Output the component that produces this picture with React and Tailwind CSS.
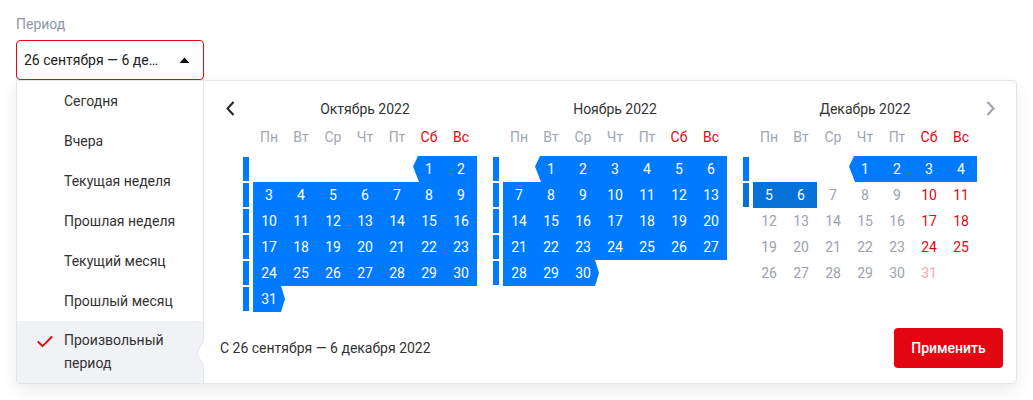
import { Check } from 'lucide-react'

const s = (d, o = {}) => ({ d, t: 's', ...o })
const ds = (d) => ({ d, t: 'ds' })
const g = (d) => ({ d, t: 'g' })
const r = (d) => ({ d, t: 'r' })
const p = (d) => ({ d, t: 'p' })
const _ = null

const range = (a, b, fn) => Array.from({ length: b - a + 1 }, (x, i) => fn(a + i))

const months = [
  {
    title: 'Октябрь 2022',
    rows: [
      { strip: 's', days: [_, _, _, _, _, s(1, { start: true }), s(2)] },
      { strip: 's', days: range(3, 9, s) },
      { strip: 's', days: range(10, 16, s) },
      { strip: 's', days: range(17, 23, s) },
      { strip: 's', days: range(24, 30, s) },
      { strip: 's', days: [s(31, { end: true }), _, _, _, _, _, _] },
    ],
  },
  {
    title: 'Ноябрь 2022',
    rows: [
      { strip: 's', days: [_, s(1, { start: true }), s(2), s(3), s(4), s(5), s(6)] },
      { strip: 's', days: range(7, 13, s) },
      { strip: 's', days: range(14, 20, s) },
      { strip: 's', days: range(21, 27, s) },
      { strip: 's', days: [s(28), s(29), s(30, { end: true }), _, _, _, _] },
    ],
  },
  {
    title: 'Декабрь 2022',
    rows: [
      { strip: 's', days: [_, _, _, s(1, { start: true }), s(2), s(3), s(4)] },
      { strip: 'd', days: [ds(5), ds(6), g(7), g(8), g(9), r(10), r(11)] },
      { strip: null, days: [...range(12, 16, g), r(17), r(18)] },
      { strip: null, days: [...range(19, 23, g), r(24), r(25)] },
      { strip: null, days: [...range(26, 30, g), p(31), _] },
    ],
  },
]

const weekdays = ['Пн', 'Вт', 'Ср', 'Чт', 'Пт', 'Сб', 'Вс']

const presets = ['Сегодня', 'Вчера', 'Текущая неделя', 'Прошлая неделя', 'Текущий месяц', 'Прошлый месяц']

function Day({ cell }) {
  if (!cell) return <div className="h-[26px] w-8" />
  let cls = 'flex h-[26px] w-8 items-center justify-center text-sm '
  if (cell.t === 's') cls += 'bg-[#007bff] text-white '
  if (cell.t === 'ds') cls += 'bg-[#0672d8] text-white '
  if (cell.t === 'g') cls += 'text-[#9ba2ad] '
  if (cell.t === 'r') cls += 'text-[#e30611] '
  if (cell.t === 'p') cls += 'text-[#efa9b0] '
  if (cell.start) cls += '[clip-path:polygon(5px_0,100%_0,100%_100%,6px_100%,0_40%)] '
  if (cell.end) cls += '[clip-path:polygon(0_0,calc(100%_-_4px)_0,100%_50%,calc(100%_-_4px)_100%,0_100%)] '
  return <div className={cls}>{cell.d}</div>
}

function Month({ month }) {
  return (
    <div className="flex w-[234px] flex-col">
      <div className="ml-[10px] h-6 pt-px text-center text-sm leading-6 text-[#333]">{month.title}</div>
      <div className="mt-[7px] ml-[10px] grid h-5 grid-cols-7 text-sm leading-5">
        {weekdays.map((w, i) => (
          <div key={w} className={i > 4 ? 'text-center text-[#e30611]' : 'text-center text-[#a0a6b1]'}>
            {w}
          </div>
        ))}
      </div>
      <div className="mt-[9px] flex flex-col">
        {month.rows.map((row, ri) => (
          <div key={ri} className="flex h-[26px]">
            <div
              className={
                'my-px mr-1 h-6 w-[6px] ' +
                (row.strip === 's' ? 'bg-[#007bff]' : row.strip === 'd' ? 'bg-[#0672d8]' : '')
              }
            />
            <div className="grid grid-cols-7">
              {row.days.map((cell, ci) => (
                <Day key={ci} cell={cell} />
              ))}
            </div>
          </div>
        ))}
      </div>
    </div>
  )
}

export default function App() {
  return (
    <div className="min-h-[400px] bg-white px-4 pt-[14px] font-['Roboto',sans-serif]">
      <div className="text-sm leading-5 text-[#8e96a4]">Период</div>

      <div className="mt-[6px] flex h-10 w-[188px] items-center rounded-[4px] border border-[#e30611] pr-[13px] pl-[7px]">
        <span className="flex-1 truncate text-sm text-[#222]">26 сентября — 6 де...</span>
        <svg width="11" height="6" viewBox="0 0 11 6" className="ml-5">
          <path d="M0.5 6 L5.5 0.5 L10.5 6 Z" fill="#111" />
        </svg>
      </div>

      <div className="flex w-[1001px] rounded-[4px] rounded-tl-none border border-[#e2e5ea] bg-white shadow-[0_6px_16px_rgba(0,0,0,0.08)]">
        <div className="flex w-[187px] flex-col border-r border-[#e2e5ea]">
          {presets.map((item) => (
            <div key={item} className="flex h-10 items-center pl-[47px] text-sm text-[#333]">
              {item}
            </div>
          ))}
          <div className="relative flex h-[62px] items-center bg-[#f1f2f6] pl-[18px] text-sm leading-[23px] text-[#333]">
            <Check size={20} strokeWidth={2.2} className="mt-[-20px] mr-[9px] text-[#e30611]" />
            <span className="w-[110px]">Произвольный период</span>
            <svg width="8" height="26" viewBox="0 0 8 26" className="absolute top-[19px] right-[-1px]">
              <path d="M8 0 L1 13 L8 26 Z" fill="#fff" />
              <path d="M7.5 0 L0.8 13 L7.5 26" fill="none" stroke="#e2e5ea" strokeWidth="1" />
            </svg>
          </div>
        </div>

        <div className="flex flex-1 flex-col">
          <div className="flex pt-[15px]">
            <div className="w-[39px] pt-[5px] pl-[22px]">
              <svg width="9" height="15" viewBox="0 0 9 15">
                <path d="M7.5 1 L1.5 7.5 L7.5 14" fill="none" stroke="#222" strokeWidth="2" />
              </svg>
            </div>
            <div className="flex gap-4">
              {months.map((m) => (
                <Month key={m.title} month={m} />
              ))}
            </div>
            <div className="w-[38px] pt-[5px] pl-[9px]">
              <svg width="9" height="15" viewBox="0 0 9 15">
                <path d="M1.5 1 L7.5 7.5 L1.5 14" fill="none" stroke="#9aa1ac" strokeWidth="2" />
              </svg>
            </div>
          </div>
          <div className="mt-4 flex items-center justify-between pr-[13px] pb-[15px] pl-4">
            <span className="text-sm text-[#333]">С 26 сентября — 6 декабря 2022</span>
            <button
              type="button"
              className="h-10 w-[109px] rounded-[4px] bg-[#e30611] text-sm font-medium text-white"
            >
              Применить
            </button>
          </div>
        </div>
      </div>
    </div>
  )
}
